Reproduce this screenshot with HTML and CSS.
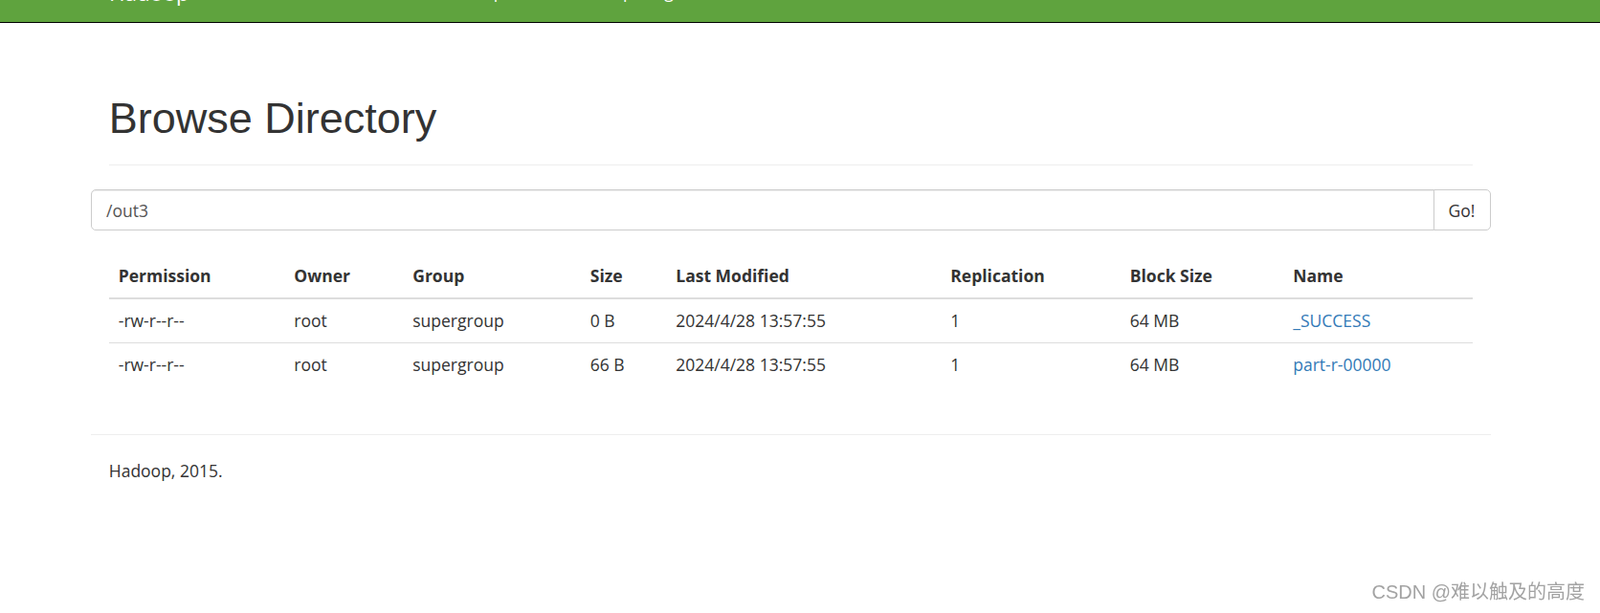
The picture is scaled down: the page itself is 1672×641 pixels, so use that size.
FILE: index.html
```html
<!DOCTYPE html>
<html lang="en">
<head>
<meta charset="utf-8">
<title>Browsing HDFS</title>
<link rel="stylesheet" href="styles.css">
</head>
<body>
<header class="navbar">
  <div class="navbar-inner">
    <a class="brand" href="#">Hadoop</a>
    <ul class="nav">
      <li><a href="#">Overview</a></li>
      <li><a href="#">Datanodes</a></li>
      <li><a href="#">Snapshot</a></li>
      <li><a href="#">Startup Progress</a></li>
      <li><a href="#">Utilities</a></li>
    </ul>
  </div>
</header>

<div class="container">
  <div class="page-header">
    <h1>Browse Directory</h1>
  </div>

  <div class="row">
    <form class="input-group">
      <input class="form-control" type="text" value="/out3">
      <button class="btn" type="button">Go!</button>
    </form>
  </div>

  <div class="panel">
    <table class="table">
      <colgroup>
        <col class="c-perm">
        <col class="c-owner">
        <col class="c-group">
        <col class="c-size">
        <col class="c-mod">
        <col class="c-repl">
        <col class="c-block">
        <col class="c-name">
      </colgroup>
      <thead>
        <tr>
          <th>Permission</th>
          <th>Owner</th>
          <th>Group</th>
          <th>Size</th>
          <th>Last Modified</th>
          <th>Replication</th>
          <th>Block Size</th>
          <th>Name</th>
        </tr>
      </thead>
      <tbody>
        <tr>
          <td>-rw-r--r--</td>
          <td>root</td>
          <td>supergroup</td>
          <td>0 B</td>
          <td>2024/4/28 13:57:55</td>
          <td>1</td>
          <td>64 MB</td>
          <td><a href="#">_SUCCESS</a></td>
        </tr>
        <tr>
          <td>-rw-r--r--</td>
          <td>root</td>
          <td>supergroup</td>
          <td>66 B</td>
          <td>2024/4/28 13:57:55</td>
          <td>1</td>
          <td>64 MB</td>
          <td><a href="#">part-r-00000</a></td>
        </tr>
      </tbody>
    </table>
  </div>

  <div class="row footer">
    <hr>
    <p class="copy">Hadoop, 2015.</p>
  </div>
</div>

<div class="watermark">CSDN @难以触及的高度</div>
</body>
</html>
```

FILE: styles.css
```css
html, body {
  margin: 0;
  padding: 0;
  height: 100%;
  overflow: hidden;
}

body {
  font-family: "Open Sans", "Noto Sans CJK SC", sans-serif;
  font-size: 17.5px;
  line-height: 25px;
  color: #333;
  background: #fff;
}

a {
  color: #337ab7;
  text-decoration: none;
}

/* ---------- navbar ---------- */
.navbar {
  height: 23px;
  background: #5fa33e;
  border-bottom: 1px solid #000;
  overflow: hidden;
}

.navbar-inner {
  display: flex;
  align-items: flex-start;
  margin-top: -20px;
  margin-left: 114px;
}

.brand {
  font-size: 22.5px;
  line-height: 25px;
  color: #fff;
  padding-right: 26px;
}

.nav {
  display: flex;
  list-style: none;
  margin: 0;
  padding: 0;
}

.nav a {
  display: block;
  padding: 0 19.5px;
  font-size: 17.5px;
  line-height: 25px;
  color: #fff;
  margin-top: -1px;
}

/* ---------- container ---------- */
.container {
  width: 1462.5px;
  margin-left: 95px;
  padding: 0 18.75px;
  box-sizing: border-box;
}

.row {
  margin: 0 -18.75px;
}

.page-header {
  margin: 75px 0 25px;
  padding-bottom: 23.75px;
  border-bottom: 1px solid #eee;
}

.page-header h1 {
  margin: 0;
  font-family: "Liberation Sans", Arial, sans-serif;
  font-size: 45px;
  line-height: 49.5px;
  font-weight: normal;
  color: #333;
}

/* ---------- input group ---------- */
.input-group {
  display: flex;
  margin: 0;
}

.form-control {
  flex: 1;
  height: 42.5px;
  box-sizing: border-box;
  padding: 7.5px 15px;
  border: 1px solid #ccc;
  border-radius: 5px 0 0 5px;
  font-family: "Open Sans", "Noto Sans CJK SC", sans-serif;
  font-size: 17.5px;
  color: #555;
  box-shadow: inset 0 1px 1px rgba(0,0,0,.075);
  outline: none;
}

.btn {
  width: 60px;
  height: 42.5px;
  box-sizing: border-box;
  margin-left: -1px;
  padding: 0;
  border: 1px solid #ccc;
  border-radius: 0 5px 5px 0;
  background: #fff;
  font-family: "Open Sans", "Noto Sans CJK SC", sans-serif;
  font-size: 17.5px;
  color: #333;
}

/* ---------- table ---------- */
.panel {
  margin-top: 25px;
}

.table {
  width: 100%;
  table-layout: fixed;
  border-collapse: collapse;
  border-spacing: 0;
  margin-bottom: 25px;
}

.c-perm { width: 183.5px; }
.c-owner { width: 124px; }
.c-group { width: 185.5px; }
.c-size { width: 89.5px; }
.c-mod { width: 287px; }
.c-repl { width: 187.5px; }
.c-block { width: 170.5px; }
.c-name { width: auto; }

.table th,
.table td {
  padding: 10px;
  line-height: 25px;
  text-align: left;
  vertical-align: top;
  white-space: nowrap;
}

.table th {
  font-weight: 700;
  border-bottom: 2px solid #ddd;
}

.table td {
  border-top: 1px solid #ddd;
}

.table tbody tr:first-child td {
  border-top: 0;
}

/* ---------- footer ---------- */
.footer {
  display: flow-root;
}

.footer hr {
  margin: 25px 0;
  border: 0;
  border-top: 1px solid #eee;
  height: 0;
}

.copy {
  margin: 0;
  padding: 0 18.75px;
}

/* ---------- watermark ---------- */
.watermark {
  position: fixed;
  right: 16px;
  bottom: 12px;
  font-family: "Liberation Sans", "Noto Sans CJK SC", sans-serif;
  font-size: 20px;
  line-height: 20px;
  color: #a3a3a3;
  white-space: nowrap;
}
```
